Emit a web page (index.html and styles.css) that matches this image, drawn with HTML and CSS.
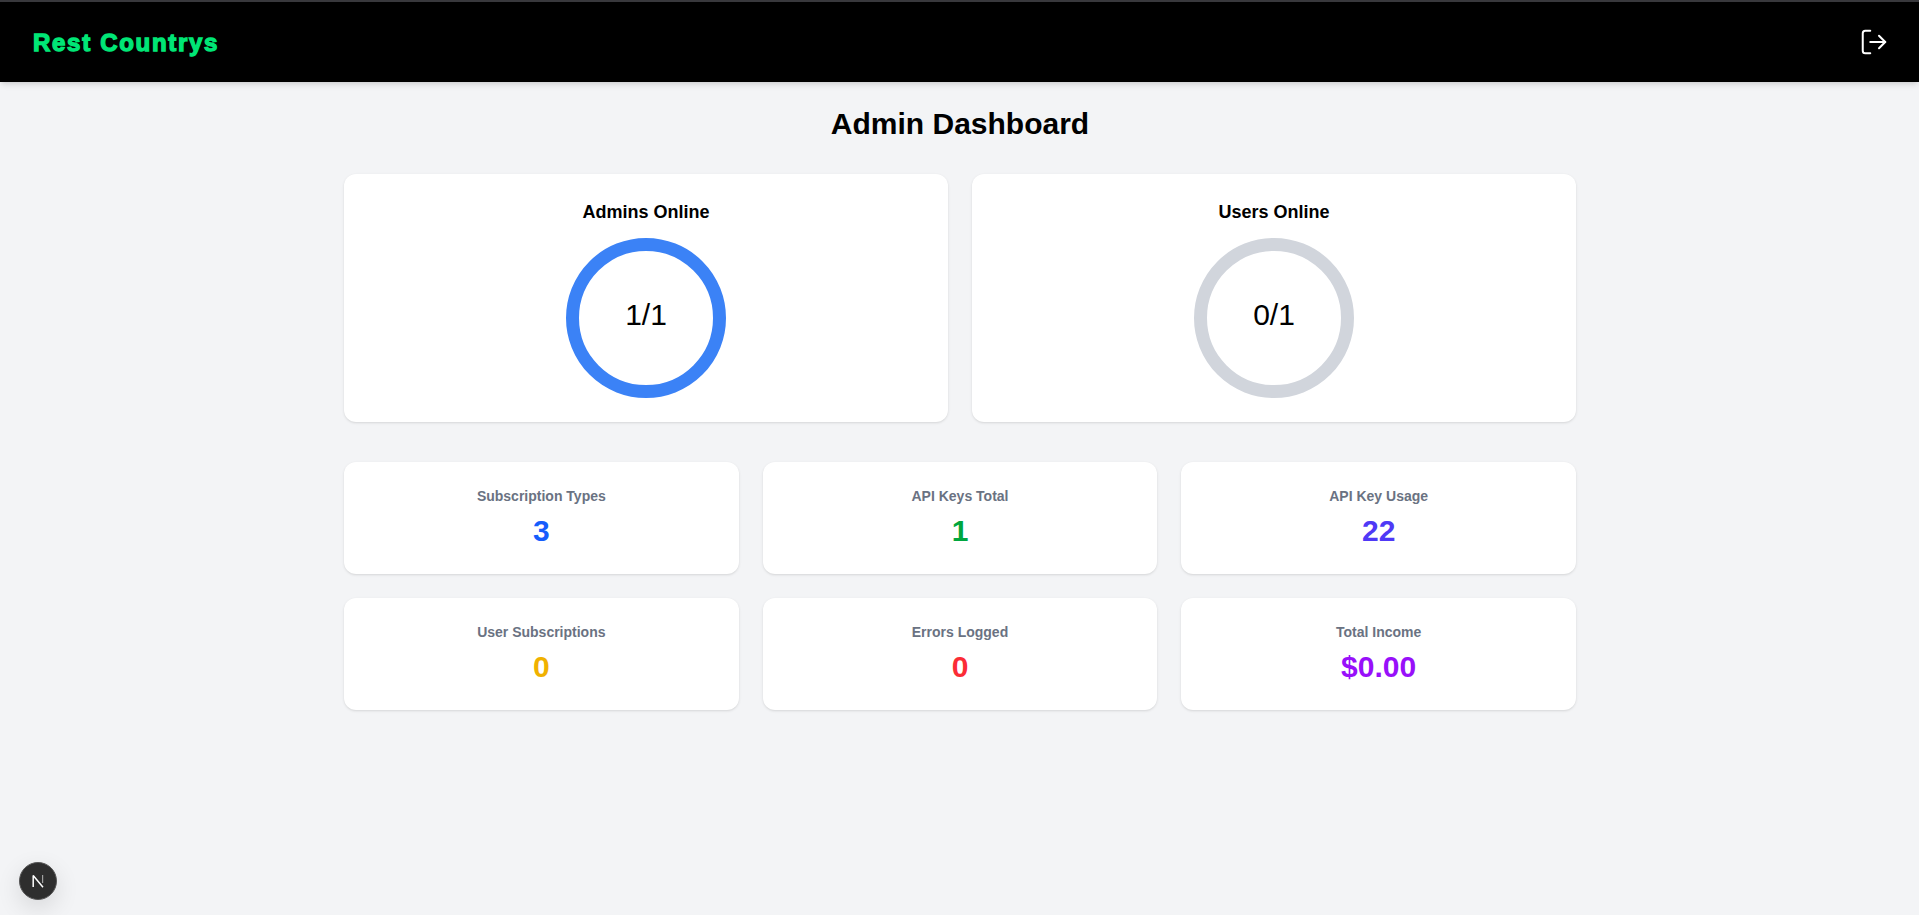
FILE: index.html
```html
<!DOCTYPE html>
<html lang="en">
<head>
    <meta charset="UTF-8">
    <meta name="viewport" content="width=device-width, initial-scale=1.0">
    <title>Admin Dashboard</title>
    <link rel="stylesheet" href="styles.css">
</head>
<body>

    <header class="navbar">
        <span class="brand">Rest Countrys</span>
        <button class="logout" aria-label="Logout">
            <svg width="30" height="30" viewBox="0 0 24 24" fill="none" stroke="currentColor" stroke-width="1.6" stroke-linecap="round" stroke-linejoin="round">
                <path d="M9 21H5a2 2 0 0 1-2-2V5a2 2 0 0 1 2-2h4"/>
                <path d="M16 17l5-5-5-5"/>
                <path d="M21 12H9"/>
            </svg>
        </button>
    </header>

    <main class="content">
        <h1 class="page-title">Admin Dashboard</h1>

        <section class="online-grid">
            <div class="card online-card">
                <h2 class="online-title">Admins Online</h2>
                <div class="ring ring-active">1/1</div>
            </div>
            <div class="card online-card">
                <h2 class="online-title">Users Online</h2>
                <div class="ring">0/1</div>
            </div>
        </section>

        <section class="stats-grid">
            <div class="card stat-card">
                <h3 class="stat-label">Subscription Types</h3>
                <p class="stat-value blue">3</p>
            </div>
            <div class="card stat-card">
                <h3 class="stat-label">API Keys Total</h3>
                <p class="stat-value green">1</p>
            </div>
            <div class="card stat-card">
                <h3 class="stat-label">API Key Usage</h3>
                <p class="stat-value indigo">22</p>
            </div>
            <div class="card stat-card">
                <h3 class="stat-label">User Subscriptions</h3>
                <p class="stat-value yellow">0</p>
            </div>
            <div class="card stat-card">
                <h3 class="stat-label">Errors Logged</h3>
                <p class="stat-value red">0</p>
            </div>
            <div class="card stat-card">
                <h3 class="stat-label">Total Income</h3>
                <p class="stat-value purple">$0.00</p>
            </div>
        </section>
    </main>

    <!-- dev tools badge -->
    <div class="dev-badge">
        <svg width="16" height="16" viewBox="0 0 16 16" fill="none" stroke="#fff">
            <path d="M3.2 14V2.6L13 14.2" stroke-width="1.5" stroke-linejoin="bevel"/>
            <path d="M12.6 2v8" stroke-width="1.2" stroke-opacity="0.55"/>
        </svg>
    </div>

</body>
</html>
```

FILE: styles.css
```css
* {
    box-sizing: border-box;
}

body {
    background-color: #f3f4f6;
    font-family: 'Liberation Sans', Arial, sans-serif;
    color: #000;
    margin: 0;
    min-height: 915px;
}

/* Top bar */
.navbar {
    display: flex;
    align-items: center;
    justify-content: space-between;
    height: 82px;
    padding: 0 30px 0 33px;
    background-color: #000;
    border-top: 2px solid #38383c;
    box-shadow: 0 4px 6px -1px rgba(0, 0, 0, 0.1), 0 2px 4px -2px rgba(0, 0, 0, 0.1);
}

.brand {
    padding-top: 1px;
    font-size: 24px;
    font-weight: 700;
    letter-spacing: 1.7px;
    color: #00e676;
    -webkit-text-stroke: 1.3px #00e676;
}

.logout {
    display: flex;
    padding: 0;
    border: none;
    background: none;
    color: #fff;
    cursor: pointer;
}

/* Page body */
.content {
    width: 1280px;
    margin-left: 320px;
    padding: 24px 24px 0;
}

.page-title {
    margin: 0 0 32px;
    font-size: 30px;
    line-height: 36px;
    font-weight: 700;
    text-align: center;
}

.card {
    background-color: #fff;
    border-radius: 12px;
    box-shadow: 0 1px 3px 0 rgba(0, 0, 0, 0.1), 0 1px 2px -1px rgba(0, 0, 0, 0.1);
}

.online-grid {
    display: grid;
    grid-template-columns: repeat(2, 1fr);
    gap: 24px;
    margin-bottom: 40px;
}

.online-card {
    display: flex;
    flex-direction: column;
    align-items: center;
    padding: 24px;
}

.online-title {
    margin: 0 0 12px;
    font-size: 18px;
    line-height: 28px;
    font-weight: 700;
}

.ring {
    display: flex;
    align-items: center;
    justify-content: center;
    width: 160px;
    height: 160px;
    padding-bottom: 7px;
    border: 13px solid #d1d5dc;
    border-radius: 50%;
    font-size: 30px;
}

.ring-active {
    border-color: #3b82f6;
}

.stats-grid {
    display: grid;
    grid-template-columns: repeat(3, 1fr);
    gap: 24px;
}

.stat-card {
    padding: 24px;
    text-align: center;
}

.stat-label {
    margin: 0 0 8px;
    font-size: 14px;
    line-height: 20px;
    font-weight: 700;
    color: #6a7282;
}

.stat-value {
    margin: -1px 0 1px;
    font-size: 30px;
    line-height: 36px;
    font-weight: 700;
}

.blue { color: #155dfc; }
.green { color: #00a63e; }
.indigo { color: #4f39f6; }
.yellow { color: #f0b100; }
.red { color: #fb2c36; }
.purple { color: #9810fa; }

/* Next.js dev badge */
.dev-badge {
    position: fixed;
    left: 19px;
    bottom: 15px;
    display: flex;
    align-items: center;
    justify-content: center;
    width: 38px;
    height: 38px;
    background-color: #2e2e2e;
    border: 1.5px solid #555;
    border-radius: 50%;
    box-shadow: 0 8px 24px rgba(0, 0, 0, 0.12);
}
```
